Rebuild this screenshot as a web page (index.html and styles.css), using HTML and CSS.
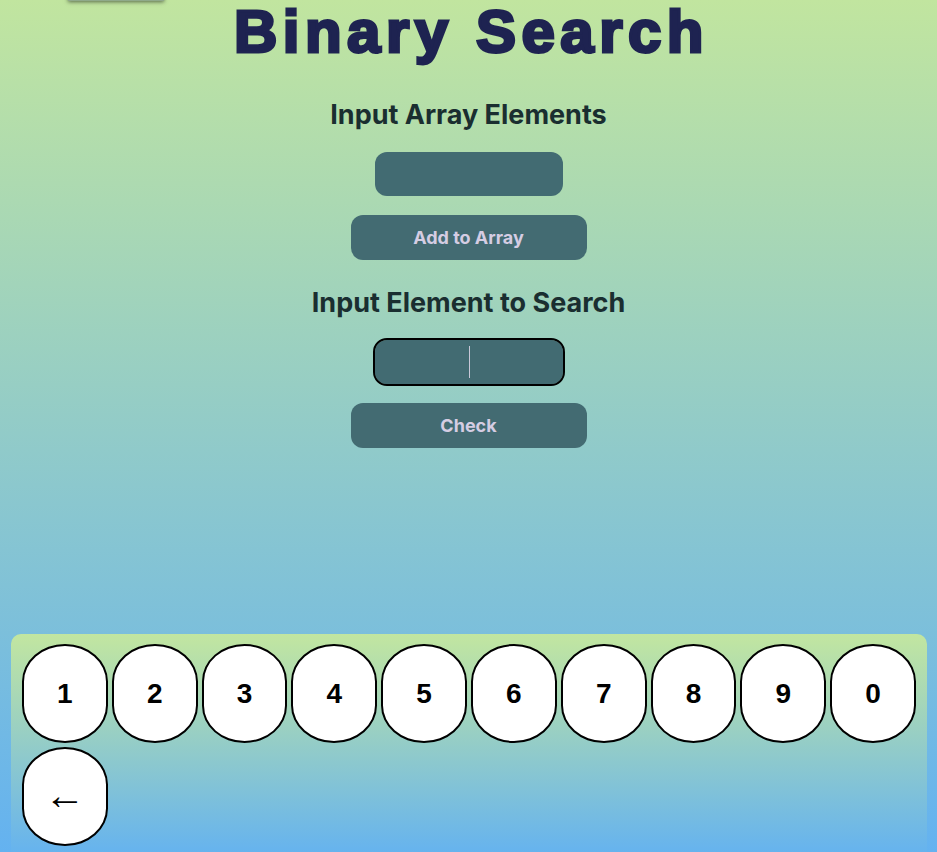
FILE: index.html
```html
<!DOCTYPE html>
<html lang="en">
<head>
<meta charset="utf-8">
<title>Binary Search</title>
<link rel="stylesheet" href="styles.css">
</head>
<body>
<div class="toggle"></div>
<main class="app">
  <h1 class="title">Binary Search</h1>
  <section class="group">
    <h2 class="label">Input Array Elements</h2>
    <input class="field" type="text">
    <button class="action">Add to Array</button>
  </section>
  <section class="group group-second">
    <h2 class="label">Input Element to Search</h2>
    <input class="field field-active" type="text">
    <button class="action">Check</button>
  </section>
</main>
<div class="keypad">
  <button class="key">1</button>
  <button class="key">2</button>
  <button class="key">3</button>
  <button class="key">4</button>
  <button class="key">5</button>
  <button class="key">6</button>
  <button class="key">7</button>
  <button class="key">8</button>
  <button class="key">9</button>
  <button class="key">0</button>
  <button class="key key-back">&larr;</button>
</div>
</body>
</html>
```
FILE: styles.css
```css
html {
  height: 100%;
}
body {
  margin: 0;
  height: 852px;
  overflow: hidden;
  background: linear-gradient(180deg, #c1e59f 0%, #64b2f0 100%);
  font-family: Inter, "Liberation Sans", sans-serif;
  position: relative;
}
.toggle {
  position: absolute;
  left: 68px;
  top: -40px;
  width: 96px;
  height: 41px;
  background: #8fa98a;
  box-shadow: 0 1px 4px rgba(0, 0, 0, 0.55);
}
.app {
  display: flex;
  flex-direction: column;
  align-items: center;
}
.title {
  margin: 2px 0 0;
  padding-left: 6px;
  font-family: "Liberation Sans", Arial, sans-serif;
  font-weight: bold;
  font-size: 60px;
  line-height: 60px;
  letter-spacing: 5.5px;
  -webkit-text-stroke: 3px #1e2351;
  color: #1e2351;
}
.group {
  align-self: stretch;
  display: flex;
  flex-direction: column;
  align-items: center;
  margin-top: 37px;
}
.group-second {
  margin-top: 27px;
}
.label {
  margin: 0;
  font-family: Inter, sans-serif;
  font-weight: 700;
  font-size: 27px;
  line-height: 32px;
  color: #1a2e30;
}
.field {
  box-sizing: border-box;
  margin-top: 21px;
  width: 188px;
  height: 44px;
  border: 0;
  border-radius: 12px;
  background-color: #426b72;
  color: #d5cde3;
  font-family: Inter, sans-serif;
  font-size: 26px;
  text-align: center;
  outline: none;
  padding: 0;
}
.field-active {
  outline: 2px solid #000;
  outline-offset: 0;
  background-image: linear-gradient(#c9c8d8, #c9c8d8);
  background-size: 1px 32px;
  background-position: 94px 6px;
  background-repeat: no-repeat;
}
.action {
  box-sizing: border-box;
  margin-top: 19px;
  width: 236px;
  height: 45px;
  border: 0;
  border-radius: 12px;
  background: #436b72;
  color: #d5cde3;
  font-family: Inter, sans-serif;
  font-weight: 700;
  font-size: 18px;
  padding: 0;
}
.keypad {
  margin: 186px 10px 0 11px;
  padding: 10px 11px 11px;
  border-radius: 10px 10px 0 0;
  background: linear-gradient(180deg, #c2e6a0 0%, #64b2f0 100%);
  display: grid;
  grid-template-columns: repeat(10, 1fr);
  column-gap: 4px;
  row-gap: 4px;
}
.key {
  box-sizing: border-box;
  height: 99px;
  border: 2px solid #000;
  border-radius: 50% / 38%;
  background: #fff;
  color: #000;
  font-family: "Liberation Sans", Arial, sans-serif;
  font-weight: bold;
  font-size: 28px;
  padding: 0;
}
.key-back {
  font-weight: normal;
  font-size: 41px;
  padding: 0 0 2px;
}
```
